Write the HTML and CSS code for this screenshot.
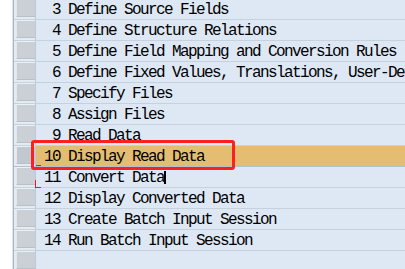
FILE: index.html
```html
<!DOCTYPE html>
<html lang="en">

<head>
    <meta charset="UTF-8">
    <meta name="viewport" content="width=device-width, initial-scale=1.0">
    <title>LSMW Steps</title>
    <link rel="stylesheet" href="styles.css">
</head>

<body>
    <div id="tela">
        <div id="margem"></div>
        <div id="lista-passos">
            <div class="linha"><div class="seletor"><span class="botao"></span></div><div class="texto"> 3 Define Source Fields</div></div>
            <div class="linha"><div class="seletor"><span class="botao"></span></div><div class="texto"> 4 Define Structure Relations</div></div>
            <div class="linha"><div class="seletor"><span class="botao"></span></div><div class="texto"> 5 Define Field Mapping and Conversion Rules</div></div>
            <div class="linha"><div class="seletor"><span class="botao"></span></div><div class="texto"> 6 Define Fixed Values, Translations, User-Defined Routines</div></div>
            <div class="linha"><div class="seletor"><span class="botao"></span></div><div class="texto"> 7 Specify Files</div></div>
            <div class="linha"><div class="seletor"><span class="botao"></span></div><div class="texto"> 8 Assign Files</div></div>
            <div class="linha"><div class="seletor"><span class="botao"></span></div><div class="texto"> 9 Read Data</div></div>
            <div class="linha ativa"><div class="seletor"><span class="botao"></span></div><div class="texto">10 Display Read Data<span class="marca-caixa"></span><span class="traco"></span></div></div>
            <div class="linha"><div class="seletor"><span class="botao"></span></div><div class="texto">11 Convert Data<span class="cursor"></span><span class="canto"></span></div></div>
            <div class="linha"><div class="seletor"><span class="botao"></span></div><div class="texto">12 Display Converted Data</div></div>
            <div class="linha"><div class="seletor"><span class="botao"></span></div><div class="texto">13 Create Batch Input Session</div></div>
            <div class="linha"><div class="seletor"><span class="botao"></span></div><div class="texto">14 Run Batch Input Session</div></div>
            <div class="linha"><div class="seletor"><span class="botao"></span></div><div class="texto"></div></div>
        </div>
    </div>
</body>

</html>
```

FILE: styles.css
```css
* {
    margin: 0px;
    padding: 0px;
    box-sizing: border-box;
}

body {
    width: 405px;
    height: 269px;
    overflow: hidden;
    background-color: #ffffff;
}

div#tela {
    display: flex;
    flex-direction: row;
    margin-top: -1px;
}

div#margem {
    flex-shrink: 0;
    width: 13px;
    background-color: #ffffff;
    border-right: 1px solid #dde2e8;
}

div#lista-passos {
    flex: 1;
    min-width: 0;
    overflow: hidden;
    border-left: 1px solid #a9b7c6;
    background-color: #dde8f4;
}

div.linha {
    height: 21px;
    display: flex;
    flex-direction: row;
    border-bottom: 1px solid #c5d1dd;
}

div.seletor {
    flex-shrink: 0;
    width: 22px;
    padding-left: 2px;
    border-right: 1px solid #bcc8d4;
    background-color: #e3ebf3;
}

span.botao {
    display: block;
    width: 19px;
    height: 18px;
    background-color: #cbd0d7;
    border-top: 1px solid #eef1f4;
    border-left: 1px solid #e4e8ec;
    border-bottom: 1px solid #b9c0c8;
}

div.texto {
    position: relative;
    flex: 1;
    height: 20px;
    padding-left: 8px;
    font-family: "Liberation Mono", "DejaVu Sans Mono", monospace;
    font-size: 16px;
    letter-spacing: -1.6px;
    line-height: 22px;
    color: #000000;
    white-space: pre;
}

div.ativa {
    border-bottom-color: #b4c0cc;
}

div.ativa div.texto {
    background-color: #e4bd73;
}

div.ativa span.botao {
    background-color: #c2c8cf;
}

span.marca-caixa {
    position: absolute;
    left: -5px;
    top: -6px;
    width: 204px;
    height: 30px;
    border: 3px solid #ff1f1f;
    border-radius: 3px;
}

span.traco {
    position: absolute;
    left: 0px;
    top: 19px;
    width: 5px;
    height: 1px;
    background-color: #e02020;
}

span.cursor {
    position: absolute;
    left: 128px;
    top: 4px;
    width: 2px;
    height: 13px;
    background-color: #000000;
}

span.canto {
    position: absolute;
    left: -1px;
    top: 13px;
    width: 6px;
    height: 8px;
    border-left: 1px solid #e02020;
    border-bottom: 1px solid #e02020;
}
```
